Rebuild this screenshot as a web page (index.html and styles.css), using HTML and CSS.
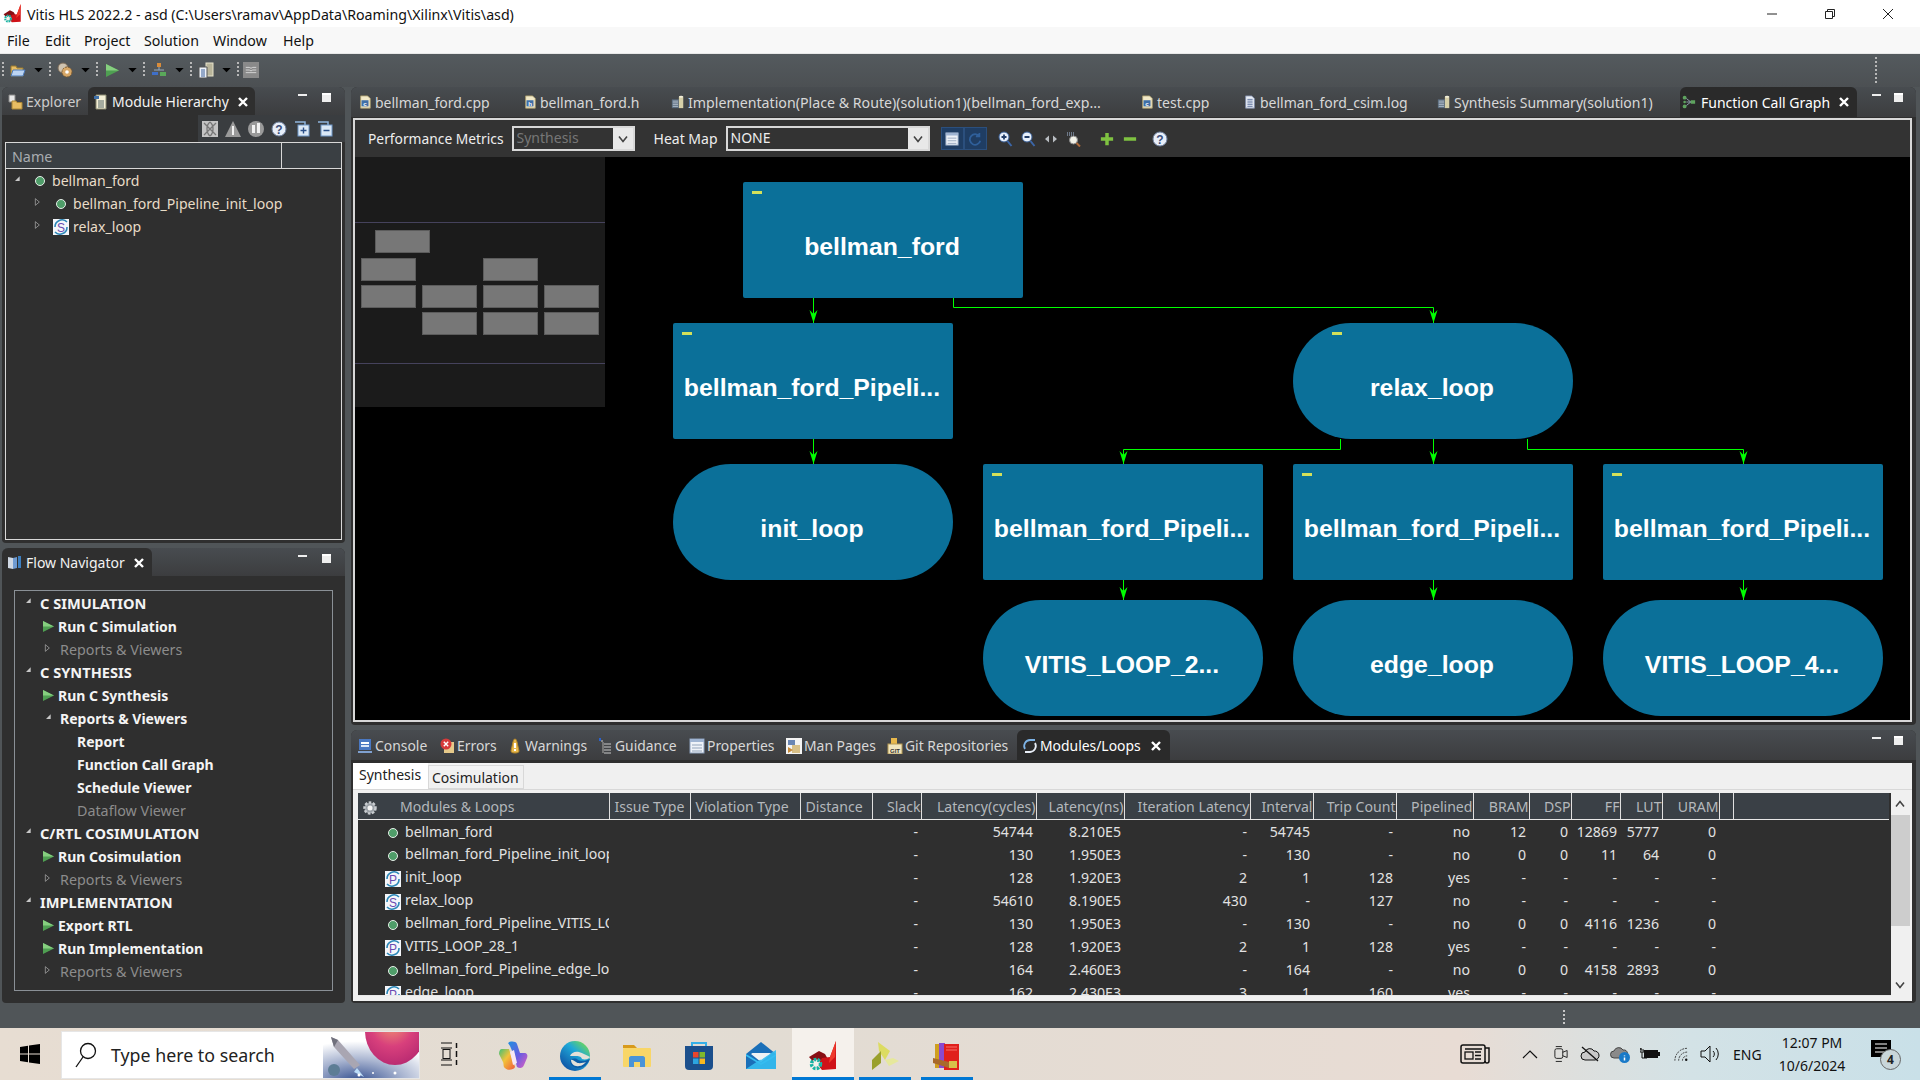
FILE: index.html
```html
<!DOCTYPE html>
<html lang="en">
<head>
<meta charset="utf-8">
<title>Vitis HLS 2022.2</title>
<link rel="stylesheet" href="styles.css">
</head>
<body>
<svg class="defs" aria-hidden="true">
  <symbol id="filebase" viewBox="0 0 16 16"><path d="M3 1h8l3 3v11H3z" fill="#f2e9c8" stroke="#a89a6a"/><rect x="4" y="6" width="8" height="7" fill="#3f6fa8"/></symbol>
  <symbol id="loopbase" viewBox="0 0 16 16"><rect width="16" height="16" fill="#f4f6fa"/><path d="M14 3A7 7 0 0 0 2 8" fill="none" stroke="#2d88b8" stroke-width="1.600"/><path d="M2 13A7 7 0 0 0 14 8" fill="none" stroke="#2d88b8" stroke-width="1.600"/></symbol>
  <symbol id="close" viewBox="0 0 10 10"><path d="M1 1l8 8M9 1L1 9" stroke="#fff" stroke-width="2.400"/></symbol>
  <symbol id="report" viewBox="0 0 16 16"><rect x="1" y="5" width="8" height="10" fill="#5b6d80"/><path d="M2 7h6M2 9h6M2 11h6M2 13h6" stroke="#b8c4d0"/><rect x="9" y="2" width="5" height="13" fill="#d6cfa8"/><ellipse cx="11.500" cy="2" rx="2.500" ry="1.200" fill="#f2eed8"/></symbol>
  <symbol id="doc" viewBox="0 0 16 16"><path d="M3 1h7l3 3v11H3z" fill="#e8edf6" stroke="#7f8ca8"/><path d="M5 5h6M5 7h6M5 9h6M5 11h6M5 13h6" stroke="#5a6f9a"/></symbol>
  <symbol id="graph" viewBox="0 0 16 16"><circle cx="3" cy="3" r="2.200" fill="#5ea35e"/><circle cx="3" cy="13" r="2.200" fill="#5ea35e"/><circle cx="3" cy="8" r="1.500" fill="#5ea35e"/><path d="M5 4l5 4-5 4M5 8h5" stroke="#9ab" fill="none"/><path d="M10 6h5v4h-5z" fill="#5ea35e"/></symbol>
  <symbol id="explorer" viewBox="0 0 16 16"><path d="M2 1h6v7H2z" fill="#e8e8e8" stroke="#888"/><path d="M5 7h4l1 1.500h5V15H5z" fill="#e7bd63" stroke="#a98636"/></symbol>
  <symbol id="hier" viewBox="0 0 16 16"><path d="M3 1h10v14H3z" fill="#f4efd6" stroke="#8a8a70"/><rect x="1" y="2" width="5" height="3" fill="#3f6fa8"/><path d="M5 7h6M5 9h6M5 11h6M5 13h6" stroke="#566"/></symbol>
  <symbol id="flowic" viewBox="0 0 16 16"><path d="M1 2l5 1v11l-5-1z" fill="#cfd8e3"/><path d="M6 3l4-1v11l-4 1z" fill="#6f9bd1"/><rect x="11" y="1" width="3" height="12" fill="#3d7fc0"/></symbol>
  <symbol id="dot" viewBox="0 0 16 16"><circle cx="8" cy="8" r="4.500" fill="#4f9d69" stroke="#e6eee8"/></symbol>
  <symbol id="play" viewBox="0 0 12 12"><path d="M0 0l12 6-12 6z" fill="#4f9f52"/><path d="M0 0l12 6H0z" fill="#86cf7f"/></symbol>
  <symbol id="open" viewBox="0 0 12 12"><path d="M2 1l6 5-6 5z" fill="#2f2f2f" stroke="#b8b8b8"/></symbol>
  <symbol id="closed" viewBox="0 0 12 12"><path d="M10 2v7H3z" fill="#c8c8c8"/></symbol>
  <symbol id="helpbase" viewBox="0 0 16 16"><circle cx="8" cy="8" r="7" fill="#e8eef8" stroke="#6d7f9c"/></symbol>
  <symbol id="down" viewBox="0 0 10 6"><path d="M0 0h10L5 5z" fill="#000"/></symbol>
  <symbol id="chev" viewBox="0 0 12 12"><path d="M2 3.500l4 5 4-5" fill="none" stroke="#444" stroke-width="1.600"/></symbol>
  <symbol id="zplus" viewBox="0 0 16 16"><circle cx="7" cy="6" r="5" fill="#e8f0fb" stroke="#395f97"/><path d="M4.500 6h5M7 3.500v5" stroke="#223c66" stroke-width="1.800"/><path d="M10.500 10l4 5" stroke="#3c66a8" stroke-width="2"/></symbol>
  <symbol id="zminus" viewBox="0 0 16 16"><circle cx="7" cy="6" r="5" fill="#e8f0fb" stroke="#395f97"/><path d="M4.500 6h5" stroke="#223c66" stroke-width="1.800"/><path d="M10.500 10l4 5" stroke="#3c66a8" stroke-width="2"/></symbol>
  <symbol id="fit" viewBox="0 0 16 16"><path d="M6 4.500l-4 3.500 4 3.500zM10 4.500l4 3.500-4 3.500z" fill="#b9bdc2"/></symbol>
  <symbol id="zsel" viewBox="0 0 16 16"><path d="M1 2h7M1 4h7" stroke="#a9c0e0" stroke-dasharray="1 1"/><circle cx="7.500" cy="9" r="4" fill="#f2f2e8" stroke="#888"/><path d="M10.500 12l3.500 3.500" stroke="#b06b3a" stroke-width="2"/></symbol>
  <symbol id="gplus" viewBox="0 0 16 16"><path d="M6 1h4v5h5v4h-5v5H6v-5H1V6h5z" fill="#7fc241"/></symbol>
  <symbol id="gminus" viewBox="0 0 16 16"><rect x="1" y="6" width="14" height="4" fill="#7fc241"/></symbol>
  <symbol id="console" viewBox="0 0 16 16"><rect x="2" y="1" width="12" height="11" fill="#4a78c2"/><rect x="4" y="4" width="8" height="2" fill="#fff"/><rect x="4" y="7" width="8" height="2" fill="#dbe6f8"/><path d="M1 14h14" stroke="#7fa0d0" stroke-width="2"/></symbol>
  <symbol id="errors" viewBox="0 0 16 16"><path d="M5 4h10v11H5z" fill="#e6c98a"/><circle cx="7" cy="6" r="5.500" fill="#d63a3a"/><path d="M4.800 3.800l4.400 4.400M9.200 3.800L4.800 8.200" stroke="#fff" stroke-width="1.400"/></symbol>
  <symbol id="warn" viewBox="0 0 16 16"><path d="M8 1c1 0 1.500 1 2 3l2 9c0 1-1 2-4 2s-4-1-4-2l2-9c.5-2 1-3 2-3z" fill="#e8b84c" stroke="#b5872a"/><rect x="7" y="5" width="2" height="5" fill="#fff"/><rect x="7" y="11" width="2" height="2" fill="#fff"/></symbol>
  <symbol id="guide" viewBox="0 0 16 16"><path d="M4 3h2M7 6h7M7 9h7M7 12h7M7 15h7" stroke="#c9c9c9"/><rect x="2" y="0" width="2" height="3" fill="#2a62d0"/><rect x="5" y="4" width="2" height="11" fill="#777"/></symbol>
  <symbol id="props" viewBox="0 0 16 16"><rect x="1" y="1" width="14" height="14" fill="#eef2f8" stroke="#8ca0bc"/><rect x="1" y="1" width="14" height="3" fill="#9fb4d2"/><path d="M3 7h10M3 10h10M3 13h10" stroke="#93a4ba"/></symbol>
  <symbol id="man" viewBox="0 0 16 16"><rect width="16" height="16" fill="#f4f4f4"/><rect x="2" y="2" width="7" height="5" fill="#6a86b4"/><path d="M6 7h8v8H6z" fill="#d8c088"/><path d="M2 9l5 3-5 3z" fill="#c68a3a"/></symbol>
  <symbol id="gitbase" viewBox="0 0 16 16"><path d="M4 0h6v6H4z" fill="#e8b84c"/><rect x="1" y="6" width="14" height="10" fill="#f1e6bf" stroke="#b59a54"/></symbol>
  <symbol id="mods" viewBox="0 0 16 16"><path d="M3 11A6 6 0 0 1 8 2h5" fill="none" stroke="#7db3e6" stroke-width="1.800"/><path d="M13 5A6 6 0 0 1 8 14H3" fill="none" stroke="#e8eef6" stroke-width="1.800"/></symbol>
  <symbol id="tbopen" viewBox="0 0 16 16"><path d="M1 4h5l1 2h6v8H1z" fill="#e7bd63" stroke="#9a7a30"/><path d="M3 8h12l-2 6H1z" fill="#bcd4f2" stroke="#4a78b8"/></symbol>
  <symbol id="tbgear" viewBox="0 0 16 16"><circle cx="6" cy="6" r="5" fill="#cfc3b0" stroke="#7a6a58"/><circle cx="10" cy="10" r="5" fill="#d8a868" stroke="#7a5a30" stroke-dasharray="2 1"/><circle cx="10" cy="10" r="1.800" fill="#fff"/></symbol>
  <symbol id="gearh" viewBox="0 0 16 16"><circle cx="8" cy="8" r="5.500" fill="#9aa0a6" stroke="#c8ccd0" stroke-width="2.500" stroke-dasharray="2.500 1.500"/><circle cx="8" cy="8" r="2.500" fill="#f4f4f4"/></symbol>
  <symbol id="tbhier" viewBox="0 0 16 16"><rect x="6" y="1" width="4" height="4" fill="#d98c3a"/><path d="M8 5v3M3 8h10" stroke="#9ab"/><rect x="1" y="10" width="6" height="3" fill="#3f6fc8"/><rect x="9" y="10" width="6" height="4" fill="#5aa85a"/></symbol>
  <symbol id="tbdoc" viewBox="0 0 16 16"><rect x="8" y="1" width="7" height="13" fill="#b8b49a" stroke="#e8e4cc"/><path d="M1 5h8v11H1z" fill="#eef2f8" stroke="#555"/><path d="M3 8h4M3 10h4M3 12h4M3 14h4" stroke="#3a5f98"/></symbol>
  <symbol id="tbwave" viewBox="0 0 16 16"><path d="M2 5h4l2 1 2-1h4M2 8h4l2 1 2-1h4M2 11h12" stroke="#ddd" fill="none"/></symbol>
  <symbol id="acx" viewBox="0 0 16 16"><rect width="16" height="16" fill="#c4c4c4"/><path d="M2 2l12 12M14 2L2 14M8 1c4 3 4 11 0 14M8 1C4 4 4 12 8 15" fill="none" stroke="#777" stroke-width="1.300"/></symbol>
  <symbol id="actri" viewBox="0 0 16 16"><path d="M8 0l8 16H0z" fill="#9a9a9a"/><path d="M7 5h2v9H7z" fill="#f2f2f2"/></symbol>
  <symbol id="acinfo" viewBox="0 0 16 16"><circle cx="8" cy="8" r="8" fill="#9a9a9a"/><path d="M4 4h3v8H4zM9 2h3v10H9z" fill="#f2f2f2"/></symbol>
  <symbol id="acplus" viewBox="0 0 16 16"><path d="M1 1h10v10" fill="none" stroke="#8fb4dc" stroke-width="1.500"/><rect x="4" y="4" width="11" height="11" fill="#dbe8f6" stroke="#6f98c8"/><path d="M6.500 9.500h6M9.500 6.500v6" stroke="#2a4f88" stroke-width="1.400"/></symbol>
  <symbol id="acminus" viewBox="0 0 16 16"><path d="M1 1h10v10" fill="none" stroke="#8fb4dc" stroke-width="1.500"/><rect x="4" y="4" width="11" height="11" fill="#dbe8f6" stroke="#6f98c8"/><path d="M6.500 9.500h6" stroke="#2a4f88" stroke-width="1.400"/></symbol>
  <symbol id="vitislogo" viewBox="0 0 30 30"><path d="M1 16L11 10l6 3 4 7-6 8-7-4z" fill="#870e13"/><path d="M14 17l8-1L28 0v28l-14 1-4-5z" fill="#cf1218"/><path d="M22 16L28 0l-1 16-6 6z" fill="#ee3a2c"/><circle cx="8" cy="23" r="4.500" fill="#f5f1ec" stroke="#17b3a3" stroke-width="3.500" stroke-dasharray="2.500 1.200"/></symbol>
</svg>

<div class="app">
  <header class="titlebar">
    <svg class="title-logo"><use href="#vitislogo"/></svg>
    <span class="title-text">Vitis HLS 2022.2 - asd (C:\Users\ramav\AppData\Roaming\Xilinx\Vitis\asd)</span>
    <div class="win-controls">
      <svg class="win-btn" viewBox="0 0 12 12"><path d="M1 6h10" stroke="#222"/></svg>
      <svg class="win-btn" viewBox="0 0 12 12"><path d="M1.500 3.500h7v7h-7zM3.500 3.500v-2h7v7h-2" fill="none" stroke="#222"/></svg>
      <svg class="win-btn" viewBox="0 0 12 12"><path d="M1 1l10 10M11 1L1 11" stroke="#222"/></svg>
    </div>
  </header>
  <nav class="menubar">
    <span class="m1">File</span><span class="m2">Edit</span><span class="m3">Project</span><span class="m4">Solution</span><span class="m5">Window</span><span class="m6">Help</span>
  </nav>
  <div class="toolbar">
    <i class="grip"></i><svg class="tb16"><use href="#tbopen"/></svg><svg class="tbdown"><use href="#down"/></svg>
    <i class="grip"></i><svg class="tb16"><use href="#tbgear"/></svg><svg class="tbdown"><use href="#down"/></svg>
    <i class="grip"></i><svg class="tb16 tbplay"><use href="#play"/></svg><svg class="tbdown"><use href="#down"/></svg>
    <i class="grip"></i><svg class="tb16"><use href="#tbhier"/></svg><svg class="tbdown"><use href="#down"/></svg>
    <i class="grip"></i><svg class="tb16"><use href="#tbdoc"/></svg><svg class="tbdown"><use href="#down"/></svg>
    <i class="grip"></i><span class="tbbtn"><svg class="ic14"><use href="#tbwave"/></svg></span>
    <i class="grip grip-right"></i>
  </div>

  <main class="workspace">
    <aside class="left-col">
      <section class="panel module-panel">
        <div class="tabstrip">
          <div class="ltab ltab-explorer"><svg class="ic16"><use href="#explorer"/></svg>Explorer</div>
          <div class="ltab ltab-module active"><svg class="ic16"><use href="#hier"/></svg>Module Hierarchy<svg class="close"><use href="#close"/></svg></div>
          <div class="viewctl"><i class="vmin"></i><i class="vmax"></i></div>
        </div>
        <div class="actions">
          <svg class="ic16"><use href="#acx"/></svg><svg class="ic16"><use href="#actri"/></svg><svg class="ic16"><use href="#acinfo"/></svg><svg class="ic16" viewBox="0 0 16 16"><use href="#helpbase"/><text x="8" y="12.500" class="ic-q">?</text></svg><svg class="ic16"><use href="#acplus"/></svg><svg class="ic16"><use href="#acminus"/></svg>
        </div>
        <div class="treebox">
          <div class="tree-head"><span class="th-name">Name</span><span class="th-rest"></span></div>
          <div class="tree-row lvl0"><svg class="arrow"><use href="#closed"/></svg><svg class="ic16"><use href="#dot"/></svg><span>bellman_ford</span></div>
          <div class="tree-row lvl1"><svg class="arrow"><use href="#open"/></svg><svg class="ic16"><use href="#dot"/></svg><span>bellman_ford_Pipeline_init_loop</span></div>
          <div class="tree-row lvl1"><svg class="arrow"><use href="#open"/></svg><svg class="ic16" viewBox="0 0 16 16"><use href="#loopbase"/><text x="8" y="12.500" class="ic-l">S</text></svg><span>relax_loop</span></div>
        </div>
      </section>

      <section class="panel flow-panel">
        <div class="tabstrip">
          <div class="ltab ltab-flow active"><svg class="ic16"><use href="#flowic"/></svg>Flow Navigator<svg class="close"><use href="#close"/></svg></div>
          <div class="viewctl"><i class="vmin"></i><i class="vmax"></i></div>
        </div>
        <div class="flowbox">
          <div class="fr sec"><svg class="arrow"><use href="#closed"/></svg>C SIMULATION</div>
          <div class="fr run"><svg class="playic"><use href="#play"/></svg>Run C Simulation</div>
          <div class="fr rep off"><svg class="arrow"><use href="#open"/></svg>Reports &amp; Viewers</div>
          <div class="fr sec"><svg class="arrow"><use href="#closed"/></svg>C SYNTHESIS</div>
          <div class="fr run"><svg class="playic"><use href="#play"/></svg>Run C Synthesis</div>
          <div class="fr rep"><svg class="arrow"><use href="#closed"/></svg>Reports &amp; Viewers</div>
          <div class="fr leaf">Report</div>
          <div class="fr leaf">Function Call Graph</div>
          <div class="fr leaf">Schedule Viewer</div>
          <div class="fr leaf off">Dataflow Viewer</div>
          <div class="fr sec"><svg class="arrow"><use href="#closed"/></svg>C/RTL COSIMULATION</div>
          <div class="fr run"><svg class="playic"><use href="#play"/></svg>Run Cosimulation</div>
          <div class="fr rep off"><svg class="arrow"><use href="#open"/></svg>Reports &amp; Viewers</div>
          <div class="fr sec"><svg class="arrow"><use href="#closed"/></svg>IMPLEMENTATION</div>
          <div class="fr run"><svg class="playic"><use href="#play"/></svg>Export RTL</div>
          <div class="fr run"><svg class="playic"><use href="#play"/></svg>Run Implementation</div>
          <div class="fr rep off"><svg class="arrow"><use href="#open"/></svg>Reports &amp; Viewers</div>
        </div>
      </section>
    </aside>

    <div class="right-col">
      <section class="panel graph-panel">
        <div class="tabstrip editor-tabs">
          <div class="etab"><svg class="ic14" viewBox="0 0 16 16"><use href="#filebase"/><text x="8" y="12" class="ic-f">c</text></svg><span>bellman_ford.cpp</span></div>
          <div class="etab"><svg class="ic14" viewBox="0 0 16 16"><use href="#filebase"/><text x="8" y="12" class="ic-f">h</text></svg><span>bellman_ford.h</span></div>
          <div class="etab"><svg class="ic14"><use href="#report"/></svg><span>Implementation(Place &amp; Route)(solution1)(bellman_ford_exp...</span></div>
          <div class="etab"><svg class="ic14" viewBox="0 0 16 16"><use href="#filebase"/><text x="8" y="12" class="ic-f">c</text></svg><span>test.cpp</span></div>
          <div class="etab"><svg class="ic14"><use href="#doc"/></svg><span>bellman_ford_csim.log</span></div>
          <div class="etab"><svg class="ic14"><use href="#report"/></svg><span>Synthesis Summary(solution1)</span></div>
          <div class="etab active"><svg class="ic14"><use href="#graph"/></svg><span>Function Call Graph</span><svg class="close"><use href="#close"/></svg></div>
          <div class="viewctl"><i class="vmin"></i><i class="vmax"></i></div>
        </div>
        <div class="graph-body">
          <div class="graph-tools">
            <span class="lbl lbl-perf">Performance Metrics</span>
            <div class="combo combo-perf"><span class="combo-val">Synthesis</span><span class="combo-btn"><svg class="ic12"><use href="#chev"/></svg></span></div>
            <span class="lbl lbl-heat">Heat Map</span>
            <div class="combo combo-heat"><span class="combo-val">NONE</span><span class="combo-btn"><svg class="ic12"><use href="#chev"/></svg></span></div>
            <span class="toggle"><svg class="ic14"><use href="#props"/></svg></span><span class="toggle toggle-off"><svg class="ic14" viewBox="0 0 16 16"><path d="M13 5A6 6 0 1 0 14 10M13 1v4H9" fill="none" stroke="#2f5f9a" stroke-width="2"/></svg></span>
            <svg class="ic16 gt-z1"><use href="#zplus"/></svg>
            <svg class="ic16 gt"><use href="#zminus"/></svg>
            <svg class="ic16 gt"><use href="#fit"/></svg>
            <svg class="ic16 gt"><use href="#zsel"/></svg>
            <svg class="ic14 gt-plus"><use href="#gplus"/></svg>
            <svg class="ic14 gt-minus"><use href="#gminus"/></svg>
            <svg class="ic16 gt-help" viewBox="0 0 16 16"><use href="#helpbase"/><text x="8" y="12.500" class="ic-q">?</text></svg>
          </div>
          <div class="canvas">
            <svg class="edges" viewBox="0 0 1555 565">
              <g fill="none" stroke="#00ff00">
                <path d="M458.500 141v25M598.500 141v9.500h480V166M458.500 282v25M985.500 282v10.500h-217V307M1078.500 282v25M1172.500 282v10.500h216V307M768.500 423v21M1078.500 423v21M1388.500 423v21"/>
              </g>
              <g fill="#00ff00">
                <path d="M458.500 166l-4-13 4 4 4-4zM1078.500 166l-4-13 4 4 4-4zM458.500 307l-4-13 4 4 4-4zM768.500 307l-4-13 4 4 4-4zM1078.500 307l-4-13 4 4 4-4zM1388.500 307l-4-13 4 4 4-4zM768.500 443l-4-13 4 4 4-4zM1078.500 443l-4-13 4 4 4-4zM1388.500 443l-4-13 4 4 4-4z"/>
              </g>
            </svg>
            <div class="node n-top"><i class="fold"></i>bellman_ford</div>
            <div class="node n-pipe"><i class="fold"></i>bellman_ford_Pipeli...</div>
            <div class="node round n-relax"><i class="fold"></i>relax_loop</div>
            <div class="node round n-init">init_loop</div>
            <div class="node n-b1"><i class="fold"></i>bellman_ford_Pipeli...</div>
            <div class="node n-b2"><i class="fold"></i>bellman_ford_Pipeli...</div>
            <div class="node n-b3"><i class="fold"></i>bellman_ford_Pipeli...</div>
            <div class="node round n-l1">VITIS_LOOP_2...</div>
            <div class="node round n-l2">edge_loop</div>
            <div class="node round n-l3">VITIS_LOOP_4...</div>
            <div class="mini">
              <i class="mini-line ml1"></i><i class="mini-line ml2"></i>
              <i class="mb mb1"></i><i class="mb mb2"></i><i class="mb mb3"></i><i class="mb mb4"></i><i class="mb mb5"></i><i class="mb mb6"></i><i class="mb mb7"></i><i class="mb mb8"></i><i class="mb mb9"></i><i class="mb mb10"></i>
            </div>
          </div>
        </div>
      </section>

      <section class="panel results-panel">
        <div class="tabstrip bottom-tabs">
          <div class="btab"><svg class="ic16"><use href="#console"/></svg><span>Console</span></div>
          <div class="btab"><svg class="ic16"><use href="#errors"/></svg><span>Errors</span></div>
          <div class="btab"><svg class="ic16"><use href="#warn"/></svg><span>Warnings</span></div>
          <div class="btab"><svg class="ic16"><use href="#guide"/></svg><span>Guidance</span></div>
          <div class="btab"><svg class="ic16"><use href="#props"/></svg><span>Properties</span></div>
          <div class="btab"><svg class="ic16"><use href="#man"/></svg><span>Man Pages</span></div>
          <div class="btab"><svg class="ic16" viewBox="0 0 16 16"><use href="#gitbase"/><text x="8" y="14.500" class="ic-g">GIT</text></svg><span>Git Repositories</span></div>
          <div class="btab active"><svg class="ic16"><use href="#mods"/></svg><span>Modules/Loops</span><svg class="close"><use href="#close"/></svg></div>
          <div class="viewctl"><i class="vmin"></i><i class="vmax"></i></div>
        </div>
        <div class="results-body">
          <div class="subtabs"><span class="sub sub-on">Synthesis</span><span class="sub">Cosimulation</span></div>
          <div class="gridwrap">
            <div class="gridclip">
              <table class="grid">
                <colgroup><col><col><col><col><col><col><col><col><col><col><col><col><col><col><col><col><col><col></colgroup>
                <thead><tr>
                  <th class="name-h"><svg class="ic16 gear-h"><use href="#gearh"/></svg>Modules &amp; Loops</th><th class="l">Issue Type</th><th class="l">Violation Type</th><th class="l">Distance</th><th>Slack</th><th>Latency(cycles)</th><th>Latency(ns)</th><th>Iteration Latency</th><th>Interval</th><th>Trip Count</th><th>Pipelined</th><th>BRAM</th><th>DSP</th><th>FF</th><th>LUT</th><th>URAM</th><th></th><th class="last"></th>
                </tr></thead>
                <tbody>
                  <tr><td class="nm"><svg class="ic16"><use href="#dot"/></svg><span>bellman_ford</span></td><td></td><td></td><td></td><td>-</td><td>54744</td><td>8.210E5</td><td>-</td><td>54745</td><td>-</td><td>no</td><td>12</td><td>0</td><td>12869</td><td>5777</td><td>0</td><td></td><td></td></tr>
                  <tr><td class="nm"><svg class="ic16"><use href="#dot"/></svg><span>bellman_ford_Pipeline_init_loop</span></td><td></td><td></td><td></td><td>-</td><td>130</td><td>1.950E3</td><td>-</td><td>130</td><td>-</td><td>no</td><td>0</td><td>0</td><td>11</td><td>64</td><td>0</td><td></td><td></td></tr>
                  <tr><td class="nm"><svg class="ic16" viewBox="0 0 16 16"><use href="#loopbase"/><text x="8" y="12.500" class="ic-l">P</text></svg><span>init_loop</span></td><td></td><td></td><td></td><td>-</td><td>128</td><td>1.920E3</td><td>2</td><td>1</td><td>128</td><td>yes</td><td>-</td><td>-</td><td>-</td><td>-</td><td>-</td><td></td><td></td></tr>
                  <tr><td class="nm"><svg class="ic16" viewBox="0 0 16 16"><use href="#loopbase"/><text x="8" y="12.500" class="ic-l">S</text></svg><span>relax_loop</span></td><td></td><td></td><td></td><td>-</td><td>54610</td><td>8.190E5</td><td>430</td><td>-</td><td>127</td><td>no</td><td>-</td><td>-</td><td>-</td><td>-</td><td>-</td><td></td><td></td></tr>
                  <tr><td class="nm"><svg class="ic16"><use href="#dot"/></svg><span>bellman_ford_Pipeline_VITIS_LOOP_28_1</span></td><td></td><td></td><td></td><td>-</td><td>130</td><td>1.950E3</td><td>-</td><td>130</td><td>-</td><td>no</td><td>0</td><td>0</td><td>4116</td><td>1236</td><td>0</td><td></td><td></td></tr>
                  <tr><td class="nm"><svg class="ic16" viewBox="0 0 16 16"><use href="#loopbase"/><text x="8" y="12.500" class="ic-l">P</text></svg><span>VITIS_LOOP_28_1</span></td><td></td><td></td><td></td><td>-</td><td>128</td><td>1.920E3</td><td>2</td><td>1</td><td>128</td><td>yes</td><td>-</td><td>-</td><td>-</td><td>-</td><td>-</td><td></td><td></td></tr>
                  <tr><td class="nm"><svg class="ic16"><use href="#dot"/></svg><span>bellman_ford_Pipeline_edge_loop</span></td><td></td><td></td><td></td><td>-</td><td>164</td><td>2.460E3</td><td>-</td><td>164</td><td>-</td><td>no</td><td>0</td><td>0</td><td>4158</td><td>2893</td><td>0</td><td></td><td></td></tr>
                  <tr><td class="nm"><svg class="ic16" viewBox="0 0 16 16"><use href="#loopbase"/><text x="8" y="12.500" class="ic-l">P</text></svg><span>edge_loop</span></td><td></td><td></td><td></td><td>-</td><td>162</td><td>2.430E3</td><td>3</td><td>1</td><td>160</td><td>yes</td><td>-</td><td>-</td><td>-</td><td>-</td><td>-</td><td></td><td></td></tr>
                </tbody>
              </table>
            </div>
            <div class="scrollbar"><svg class="ic12 sb-up"><use href="#chev"/></svg><i class="thumb"></i><svg class="ic12 sb-down"><use href="#chev"/></svg></div>
          </div>
        </div>
      </section>
    </div>
  </main>

  <div class="statusbar"><i class="status-grip"></i></div>

  <footer class="taskbar">
    <svg class="win-logo" viewBox="0 0 20 20"><path d="M0 3l8-1.200V9.500H0zM9 1.600L20 0v9.500H9zM0 10.500h8v7.700L0 17zM9 10.500h11V20L9 18.400z" fill="#000"/></svg>
    <div class="search">
      <svg class="search-ic" viewBox="0 0 22 26"><circle cx="13" cy="9" r="7.500" fill="none" stroke="#111" stroke-width="1.300"/><path d="M8 15L1 25" stroke="#111" stroke-width="1.300"/></svg>
      <span class="search-text">Type here to search</span>
      <svg class="search-art" viewBox="0 0 96 46">
        <defs>
          <radialGradient id="artbg" cx=".35" cy="1.100" r=".9"><stop offset="0" stop-color="#2e4a8c"/><stop offset=".55" stop-color="#a8b4d0"/><stop offset="1" stop-color="#fff"/></radialGradient>
          <radialGradient id="sphere" cx=".45" cy=".35" r=".75"><stop offset="0" stop-color="#f4a070"/><stop offset=".5" stop-color="#d8407c"/><stop offset="1" stop-color="#b0246e"/></radialGradient>
        </defs>
        <rect width="96" height="46" fill="url(#artbg)"/>
        <ellipse cx="72" cy="-1" rx="30" ry="34" fill="url(#sphere)"/>
        <path d="M8 5l7 3 22 25-6 4L11 15z" fill="#a9a6b2"/>
        <path d="M8 5l7 3-4 7z" fill="#70707c"/>
        <path d="M34 36l7 9-10-5z" fill="#bcdcf8"/>
        <circle cx="11" cy="38" r="6" fill="#5d7d95"/>
        <circle cx="36" cy="43" r="1.500" fill="#fff"/><circle cx="72" cy="41" r="1.500" fill="#fff"/><circle cx="50" cy="41" r="1" fill="#fff"/>
      </svg>
    </div>
    <svg class="taskview" viewBox="0 0 20 24"><path d="M1 1h11M1 6h11M1 18h11M1 23h11" stroke="#111" stroke-width="1.200"/><rect x="3" y="7.500" width="7" height="9" fill="none" stroke="#111"/><path d="M16.500 1v5M16.500 9v6M16.500 18v5" stroke="#111" stroke-width="1.500"/></svg>
    <div class="apps">
      <span class="app-slot"><svg class="app-ic" viewBox="0 0 30 30">
        <defs><linearGradient id="cop1" x1="0" y1="0" x2="1" y2="1"><stop offset="0" stop-color="#1f8fe0"/><stop offset=".55" stop-color="#6c5ce0"/><stop offset="1" stop-color="#e060c0"/></linearGradient><linearGradient id="cop2" x1="0" y1="0" x2="1" y2="1"><stop offset="0" stop-color="#3fbf7a"/><stop offset=".45" stop-color="#f2c23a"/><stop offset="1" stop-color="#ef5a3a"/></linearGradient></defs>
        <path d="M10 2c2-2 8-2 9 1l3 9h4c3 0 4 2 3 5l-3 7c-1 3-4 4-7 2l-4-14-3-7z" fill="url(#cop1)"/><path d="M4 8h7l6 18c-1 3-8 4-10 1-2-1-1-4-2-6L1 13c0-3 1-5 3-5z" fill="url(#cop2)"/><path d="M12 11l4-2 3 13-4 2z" fill="#f8e8f4"/></svg></span>
      <span class="app-slot slot-edge"><svg class="app-ic" viewBox="0 0 30 30">
        <defs><linearGradient id="edge" x1=".9" y1=".1" x2=".2" y2=".9"><stop offset="0" stop-color="#70d858"/><stop offset=".4" stop-color="#1fa8d8"/><stop offset="1" stop-color="#0f58a8"/></linearGradient></defs>
        <circle cx="15" cy="15" r="15" fill="url(#edge)"/><path d="M10 15c1-3 5-5 9-4 4 1 7 3 11 5-1 2-5 3-8 2-1-3-4-3-6-3z" fill="#e4e0d8"/><path d="M30 18c-3 1-7 3-12 1-2-2-6-2-8 1 0 4 4 7 8 7 6 0 10-4 12-9z" fill="#0d5ea8"/><path d="M11 19c0 4 4 7 8 6 3 0 5-2 7-4-3 1-8 2-10 0-2-1-4-3-5-2z" fill="#e4e0d8"/></svg></span>
      <span class="app-slot"><svg class="app-ic" viewBox="0 0 30 30"><path d="M1 4h11l3 3H1z" fill="#d89a1c"/><rect x="1" y="7" width="28" height="19" rx="1" fill="#f8d668"/><path d="M7 26V17c0-1 1-2 2-2h12c1 0 2 1 2 2v9h-5v-5h-6v5z" fill="#4a94d8"/></svg></span>
      <span class="app-slot"><svg class="app-ic" viewBox="0 0 30 30"><path d="M8 6V2h14v4" fill="none" stroke="#35b0e8" stroke-width="2"/><path d="M1 5h28v20a4 4 0 0 1-4 4H5a4 4 0 0 1-4-4z" fill="#1b4f8c"/><rect x="9" y="11" width="5.500" height="5.500" fill="#e8452c"/><rect x="15.500" y="11" width="5.500" height="5.500" fill="#7fba2c"/><rect x="9" y="17.500" width="5.500" height="5.500" fill="#2ca5e0"/><rect x="15.500" y="17.500" width="5.500" height="5.500" fill="#f8b820"/></svg></span>
      <span class="app-slot"><svg class="app-ic" viewBox="0 0 30 30"><path d="M15 1l15 12v15H0V13z" fill="#1a6fb8"/><path d="M5 13h20l-10 8z" fill="#f0f4f6"/><path d="M15 18L30 9v19H0z" fill="#35bdf0" opacity=".9"/><path d="M0 13l15 9 15-9v2L15 24 0 15z" fill="#35bdf0"/><path d="M5 12h20L15 19z" fill="#eef2f4"/></svg></span>
      <span class="app-slot slot-vitis"><svg class="app-ic"><use href="#vitislogo"/></svg></span>
      <span class="app-slot slot-viv"><svg class="app-ic" viewBox="0 0 30 30"><path d="M8 1l12 9-5 9-6-9z" fill="#dcdc62"/><path d="M15 19l8-2 6 3-10 5z" fill="#e6e89c"/><path d="M2 19l9-9v12L2 29z" fill="#9aa02c"/></svg></span>
      <span class="app-slot slot-book"><svg class="app-ic" viewBox="0 0 30 30"><rect x="3" y="3" width="5" height="24" fill="#d0a020"/><rect x="7" y="2" width="6" height="25" fill="#8a4ad0"/><rect x="12" y="3" width="15" height="26" fill="#e0201c"/><path d="M14 6h11M14 9h11" stroke="#f87068"/><path d="M1 17l16 4v6L1 22z" fill="#a86a2c"/><rect x="17" y="20" width="8" height="7" fill="#d8c04a"/></svg></span>
    </div>
    <div class="tray">
      <svg class="news" viewBox="0 0 30 20"><rect x="1" y="1" width="24" height="18" rx="2" fill="none" stroke="#111" stroke-width="1.500"/><path d="M25 4h4v13a2 2 0 0 1-4 0" fill="none" stroke="#111" stroke-width="1.500"/><rect x="5" y="8" width="8" height="7" fill="none" stroke="#111" stroke-width="1.300"/><path d="M5 5h17M15 8h6M15 11.500h6M15 15h6" stroke="#111" stroke-width="1.300"/></svg>
      <svg class="tr t-chev" viewBox="0 0 16 10"><path d="M1 9l7-7 7 7" fill="none" stroke="#111" stroke-width="1.200"/></svg>
      <svg class="tr t-meet" viewBox="0 0 16 20"><rect x="1" y="4" width="9" height="11" rx="2" fill="none" stroke="#111"/><path d="M10 8l5-2v8l-5-2" fill="none" stroke="#111"/><path d="M2 1.500h7M2 18.500h7" stroke="#111"/></svg>
      <svg class="tr t-cloud" viewBox="0 0 20 18"><path d="M5 15a4 4 0 0 1 0-8 5 5 0 0 1 9-1 4.500 4.500 0 0 1 1 9z" fill="#c9c9c9" stroke="#111"/><path d="M2 2l16 14" stroke="#111" stroke-width="1.300"/></svg>
      <svg class="tr t-cloudi" viewBox="0 0 20 18"><path d="M4 13a3.500 3.500 0 0 1 0-7 5 5 0 0 1 9-1 4 4 0 0 1 1 8z" fill="#8a8a8a" stroke="#444"/><circle cx="14.500" cy="12.500" r="5.500" fill="#1a7ac8"/><path d="M14.500 10.500v.8M14.500 12.500v3" stroke="#fff" stroke-width="1.500"/></svg>
      <svg class="tr t-batt" viewBox="0 0 20 12"><rect x="4" y="2" width="14" height="8" fill="#111"/><rect x="18" y="4" width="2" height="4" fill="#111"/><path d="M1 0v2h3v2H0V2zM2 4v6h5" fill="none" stroke="#111"/></svg>
      <svg class="tr t-wifi" viewBox="0 0 18 16"><path d="M2 15A13 13 0 0 1 15 2M6 15a9 9 0 0 1 9-9M10 15a5 5 0 0 1 5-5" fill="none" stroke="#333" stroke-dasharray="2 1"/><circle cx="14" cy="14" r="1.300" fill="#111"/></svg>
      <svg class="tr t-vol" viewBox="0 0 20 18"><path d="M1 6h4l5-5v16l-5-5H1z" fill="none" stroke="#111"/><path d="M13 6a4 4 0 0 1 0 6M16 3a9 9 0 0 1 0 12" fill="none" stroke="#111"/></svg>
      <span class="eng">ENG</span>
      <div class="clock"><span>12:07 PM</span><span>10/6/2024</span></div>
      <div class="action"><svg class="action-ic" viewBox="0 0 20 18"><path d="M0 0h20v17H0z" fill="#000"/><path d="M4 4h12M4 8h12M4 12h12" stroke="#fff"/></svg><span class="badge">4</span></div>
    </div>
  </footer>
</div>
</body>
</html>
```

FILE: styles.css
```css
* { box-sizing: border-box; }
html, body { margin: 0; padding: 0; height: 100%; overflow: hidden; }
body { font-family: "Noto Sans", "Open Sans", sans-serif; font-size: 14.1px; color: #ddd; background: #505558; }
.defs { position: absolute; width: 0; height: 0; }
.app { display: flex; flex-direction: column; width: 1920px; height: 1080px; }
i { display: block; font-style: normal; }
svg text { font-family: "Liberation Sans", sans-serif; text-anchor: middle; }
.ic-q { font-size: 12px; font-weight: 700; fill: #3a4d78; }
.ic-l { font-size: 12px; fill: #6a4bb0; }
.ic-f { font-size: 7px; font-weight: 700; fill: #fff; }
.ic-g { font-size: 6px; font-weight: 700; fill: #333; }

/* title + menu */
.titlebar { height: 27px; background: #fff; display: flex; align-items: center; color: #111; flex: none; }
.title-logo { width: 19px; height: 19px; margin-left: 3px; flex: none; }
.title-text { margin-left: 5px; font-size: 14.2px; white-space: nowrap; padding-top: 1px; }
.win-controls { margin-left: auto; display: flex; padding-right: 26px; }
.win-btn { width: 12px; height: 12px; margin-left: 46px; }
.menubar { height: 26px; background: #f8f8f8; display: flex; align-items: center; color: #111; font-size: 14.2px; flex: none; padding-left: 7px; padding-top: 1px; }
.m1 { width: 38px; } .m2 { width: 39px; } .m3 { width: 60px; } .m4 { width: 69px; } .m5 { width: 70px; }

/* toolbar */
.toolbar { height: 34px; background: linear-gradient(#e8e8e8 0 1px, #545a5e 1px, #4c5053); flex: none; display: flex; align-items: center; padding-left: 2px; }
.grip { width: 2px; height: 16px; background: repeating-linear-gradient(#b8b8b8 0 2px, transparent 2px 4px); }
.tb16 { width: 16px; height: 16px; margin: 0 8px 0 6px; flex: none; }
.tbplay { width: 13px; height: 13px; margin: 0 9px 0 8px; }
.tbdown { width: 9px; height: 5px; margin-right: 6px; flex: none; }
.tbbtn { width: 16px; height: 16px; background: #8a8a8a; margin-left: 4px; display: flex; align-items: center; justify-content: center; }
.grip-right { margin-left: auto; margin-right: 43px; height: 26px; }
.ic12 { width: 12px; height: 12px; flex: none; }
.ic14 { width: 14px; height: 14px; flex: none; }
.ic16 { width: 16px; height: 16px; flex: none; }

/* workspace */
.workspace { height: 916px; display: flex; flex: none; padding-left: 2px; gap: 6px; }
.left-col { width: 343px; display: flex; flex-direction: column; gap: 5px; flex: none; }
.right-col { width: 1565px; display: flex; flex-direction: column; gap: 5px; flex: none; }
.panel { background: #2f2f2f; border-radius: 6px 6px 4px 4px; display: flex; flex-direction: column; overflow: hidden; }
.module-panel { height: 456px; }
.flow-panel { height: 455px; }
.graph-panel { height: 638px; }
.results-panel { height: 273px; }
.statusbar { height: 25px; flex: none; position: relative; background: #505558; }
.status-grip { position: absolute; left: 1563px; top: 7px; width: 2px; height: 16px; background: repeating-linear-gradient(#c8c8c8 0 2px, transparent 2px 4px); }

.tabstrip { height: 28px; background: linear-gradient(#484c50, #3c3d3f); display: flex; align-items: stretch; flex: none; white-space: nowrap; }
.close { width: 10px; height: 10px; flex: none; }
.viewctl { margin-left: auto; display: flex; gap: 15px; padding: 6px 14px 0 0; align-items: flex-start; }
.editor-tabs .viewctl, .bottom-tabs .viewctl { gap: 13px; padding-right: 13px; }
.vmin { width: 9px; height: 2px; margin-top: 1px; background: #eee; }
.vmax { width: 9px; height: 9px; background: #eee; border-top: 2px solid #fff; }

.ltab { display: flex; align-items: center; gap: 3px; color: #ccc; font-size: 14px; padding-top: 1px; }
.ltab.active { background: #2f2f2f; color: #f2f2f2; border-radius: 6px 6px 0 0; }
.ltab-explorer { width: 86px; padding-left: 5px; }
.ltab-module { width: 167px; padding-left: 5px; }
.ltab-module .close, .ltab-flow .close { margin-left: 6px; }
.ltab-flow { width: 150px; padding-left: 5px; }

.actions { height: 27px; display: flex; justify-content: flex-end; align-items: center; gap: 7px; padding-right: 12px; flex: none; background: linear-gradient(90deg, #2f2f2f 196px, #3a3d40 196px); }
.treebox { margin: 0 3px 3px; border: 1px solid #d8d8d8; flex: 1; }
.tree-head { height: 26px; background: #3a3f43; border-bottom: 1px solid #d8d8d8; display: flex; align-items: center; color: #a8acb0; font-size: 14.3px; }
.th-name { width: 276px; height: 100%; border-right: 1px solid #d8d8d8; padding: 1px 0 0 6px; display: flex; align-items: center; }
.tree-row { height: 23px; display: flex; align-items: center; white-space: nowrap; color: #e8dcc8; }
.lvl0 { padding-left: 7px; }
.lvl1 { padding-left: 28px; }
.arrow { width: 8px; height: 8px; margin-right: 11px; margin-top: -4px; flex: none; }
.tree-row span { margin-left: 4px; }

.flowbox { margin: 14px 12px 12px 12px; border: 1px solid #8a9096; flex: 1; padding-top: 1px; font-weight: 700; color: #f4f4f4; font-size: 14px; }
.fr { height: 23px; display: flex; align-items: center; white-space: nowrap; }
.fr.off { font-weight: 400; color: #8c8c8c; font-size: 14.3px; }
.sec { padding: 0 0 1px 9px; font-size: 14.6px; }
.sec .arrow { margin-right: 8px; }
.run { padding-left: 28px; }
.playic { width: 11px; height: 11px; margin-right: 4px; flex: none; }
.rep { padding-left: 29px; }
.rep .arrow { margin-right: 8px; }
.leaf { padding-left: 62px; }

/* editor tabs */
.editor-tabs { height: 30px; padding-left: 7px; font-size: 14px; color: #d8d8d8; }
.etab { display: flex; align-items: center; gap: 3px; overflow: hidden; }
.etab.active { background: #2a2a2a; color: #fff; border-radius: 6px 6px 0 0; padding-left: 2px; gap: 5px; }
.etab .close { margin-left: 4px; }
.etab:nth-child(1) { width: 165px; }
.etab:nth-child(2) { width: 147px; }
.etab:nth-child(3) { width: 470px; font-size: 14.2px; padding-left: 1px; }
.etab:nth-child(4) { width: 103px; }
.etab:nth-child(5) { width: 193px; }
.etab:nth-child(6) { width: 244px; padding-left: 1px; }
.etab:nth-child(7) { width: 177px; }
.graph-body { flex: 1; background: #000; border: 2px solid #d8d8d8; margin: 1px 4px 3px 2px; display: flex; flex-direction: column; min-height: 0; }
.graph-tools { height: 37px; background: #333; display: flex; align-items: center; flex: none; font-size: 14px; color: #eee; white-space: nowrap; }
.lbl-perf { margin-left: 13px; font-size: 13.8px; }
.lbl-heat { margin-left: 19px; }
.combo { height: 25px; border: 2px solid #d8d8d8; display: flex; align-items: stretch; background: #333; margin-left: 8px; font-size: 14px; }
.combo-perf { width: 123px; color: #777; }
.combo-heat { width: 204px; color: #eee; }
.combo-val { flex: 1; padding-left: 3px; line-height: 20px; }
.combo-btn { width: 20px; background: #e8e8e8; display: flex; align-items: center; justify-content: center; }
.toggle { width: 23px; height: 23px; background: #1f3d63; display: flex; align-items: center; justify-content: center; border: 1px solid #2b4f7d; }
.combo-heat + .toggle { margin-left: 11px; }
.gt-z1 { margin-left: 10px; }
.gt { margin-left: 7px; }
.gt-plus { margin-left: 18px; }
.gt-minus { margin-left: 9px; }
.gt-help { margin-left: 15px; }

.canvas { flex: 1; position: relative; overflow: hidden; background: #000; }
.edges { position: absolute; left: 0; top: 0; width: 1555px; height: 565px; }
.node { position: absolute; width: 280px; height: 116px; background: #0b7099; color: #fff; font: 700 24.8px "Liberation Sans", sans-serif; display: flex; align-items: center; justify-content: center; border-radius: 2px; white-space: nowrap; padding: 13px 2px 0 0; }
.node.round { border-radius: 58px; }
.fold { position: absolute; left: 9px; top: 9px; width: 10px; height: 3px; background: #d4e05a; }
.round .fold { left: 39px; }
.n-top { left: 388px; top: 25px; }
.n-pipe { left: 318px; top: 166px; }
.n-relax { left: 938px; top: 166px; }
.n-init { left: 318px; top: 307px; }
.n-b1 { left: 628px; top: 307px; }
.n-b2 { left: 938px; top: 307px; }
.n-b3 { left: 1248px; top: 307px; }
.n-l1 { left: 628px; top: 443px; }
.n-l2 { left: 938px; top: 443px; }
.n-l3 { left: 1248px; top: 443px; }
.mini { position: absolute; left: 0; top: 0; width: 250px; height: 250px; background: #1b1b1b; }
.mini-line { position: absolute; left: 0; width: 250px; height: 1px; background: #45425c; }
.ml1 { top: 65px; }
.ml2 { top: 206px; }
.mb { position: absolute; width: 55px; height: 23px; background: #777; border: 1px solid #5c5c5c; }
.mb1 { left: 20px; top: 73px; }
.mb2 { left: 6px; top: 101px; }
.mb3 { left: 128px; top: 101px; }
.mb4 { left: 6px; top: 128px; }
.mb5 { left: 67px; top: 128px; }
.mb6 { left: 128px; top: 128px; }
.mb7 { left: 189px; top: 128px; }
.mb8 { left: 67px; top: 155px; }
.mb9 { left: 128px; top: 155px; }
.mb10 { left: 189px; top: 155px; }

/* bottom tabs */
.bottom-tabs { height: 30px; padding-left: 6px; font-size: 13.9px; color: #d8d8d8; }
.btab { display: flex; align-items: center; gap: 2px; padding-top: 1px; }
.btab.active { background: #2a2a2a; color: #fff; border-radius: 6px 6px 0 0; padding-left: 5px; }
.btab .close { margin-left: 8px; }
.btab:nth-child(1) { width: 82px; }
.btab:nth-child(2) { width: 68px; }
.btab:nth-child(3) { width: 90px; }
.btab:nth-child(4) { width: 92px; }
.btab:nth-child(5) { width: 97px; }
.btab:nth-child(6) { width: 101px; }
.btab:nth-child(7) { width: 130px; }
.btab:nth-child(8) { width: 153px; }
.results-body { flex: 1; background: #f0f0f0; margin: 3px 4px 2px 2px; display: flex; flex-direction: column; min-height: 0; color: #222; }
.subtabs { height: 27px; display: flex; border-bottom: 1px solid #d8d8d8; flex: none; }
.sub { width: 96px; margin-top: 2px; background: #f0f0f0; border: 1px solid #d8d8d8; padding-left: 3px; font-size: 14px; line-height: 23px; }
.sub-on { width: 75px; margin-top: 0; background: #fff; padding-left: 6px; border: 0; }
.gridwrap { margin: 3px 2px 0 5px; flex: 1; display: flex; min-height: 0; border-bottom: 5px solid #f0f0f0; }
.gridclip { flex: 1; overflow: hidden; background: #2f2f2f; border-bottom: 1px solid #e8e8e8; }
.grid { table-layout: fixed; width: 1531px; border-collapse: collapse; color: #e2e2e2; font-size: 14.1px; }
.grid col:nth-child(1) { width: 251px; }
.grid col:nth-child(2) { width: 81px; }
.grid col:nth-child(3) { width: 110px; }
.grid col:nth-child(4) { width: 72px; }
.grid col:nth-child(5) { width: 49px; }
.grid col:nth-child(6) { width: 115px; }
.grid col:nth-child(7) { width: 88px; }
.grid col:nth-child(8) { width: 126px; }
.grid col:nth-child(9) { width: 63px; }
.grid col:nth-child(10) { width: 83px; }
.grid col:nth-child(11) { width: 77px; }
.grid col:nth-child(12) { width: 56px; }
.grid col:nth-child(13) { width: 42px; }
.grid col:nth-child(14) { width: 49px; }
.grid col:nth-child(15) { width: 42px; }
.grid col:nth-child(16) { width: 57px; }
.grid col:nth-child(17) { width: 14px; }
.grid th { height: 26px; background: #3a4046; color: #b4b8bc; font-weight: 400; text-align: right; padding: 1px 0 0; border-right: 1px solid #e0e0e0; border-bottom: 1px solid #e8e8e8; overflow: hidden; white-space: nowrap; }
.grid th.l { text-align: left; padding-left: 5px; }
.grid th.last { border-right: 0; }
.grid th.name-h { text-align: left; padding-left: 0; }
.gear-h { vertical-align: middle; margin: 0 22px 0 4px; }
.grid td { height: 23px; padding: 1px 3px 0 0; text-align: right; overflow: hidden; white-space: nowrap; }
.grid td.nm { text-align: left; padding: 1px 0 0; }
.nm svg { vertical-align: middle; margin-left: 27px; margin-right: 4px; }
.scrollbar { width: 19px; background: #f0f0f0; position: relative; flex: none; }
.thumb { position: absolute; left: 0; top: 22px; width: 19px; height: 111px; background: #cdcdcd; }
.sb-up { position: absolute; left: 3px; top: 5px; transform: rotate(180deg); }
.sb-down { position: absolute; left: 3px; top: 186px; }

/* taskbar */
.taskbar { height: 52px; flex: none; display: flex; align-items: center; position: relative; background: linear-gradient(90deg, #e7ddd2, #e2dcd3 40%, #e8dcd4 76%, #d3e2e6 88%, #c9e0e8); color: #111; }
.win-logo { width: 20px; height: 20px; margin-left: 20px; flex: none; }
.search { margin-left: 21px; width: 359px; height: 48px; background: #fff; display: flex; align-items: center; flex: none; margin-top: 2px; border: 1px solid #e6e6e6; }
.search-ic { width: 22px; height: 26px; margin-left: 13px; flex: none; }
.search-text { margin-left: 14px; font-size: 17.8px; color: #222; white-space: nowrap; }
.search-art { width: 96px; height: 46px; margin-left: auto; flex: none; }
.taskview { width: 20px; height: 24px; margin-left: 20px; flex: none; }
.apps { display: flex; margin-left: 22px; height: 52px; align-items: center; flex: none; }
.app-slot { width: 62px; height: 52px; display: flex; align-items: center; justify-content: center; flex: none; position: relative; padding-top: 3px; }
.app-ic { width: 30px; height: 30px; }
.slot-edge::after, .slot-vitis::after, .slot-viv::after, .slot-book::after { content: ""; position: absolute; bottom: 0; height: 3px; left: 5px; right: 5px; background: #0078d4; }
.slot-vitis { background: #f5f1ec; }
.slot-vitis::after { left: 0; right: 0; }
.tray { margin-left: auto; display: flex; align-items: center; height: 52px; padding-right: 15px; flex: none; }
.news { width: 30px; height: 20px; }
.tr { height: 18px; margin-left: 13px; }
.t-chev { width: 16px; height: 10px; margin-left: 32px; }
.t-meet { width: 14px; height: 20px; margin-left: 16px; }
.t-cloud { width: 20px; margin-left: 12px; }
.t-cloudi { width: 20px; margin-left: 10px; }
.t-batt { width: 20px; height: 12px; margin-left: 10px; }
.t-wifi { width: 17px; height: 16px; margin-left: 13px; }
.t-vol { width: 20px; margin-left: 10px; }
.eng { margin-left: 13px; font-size: 14px; width: 29px; }
.clock { width: 70px; margin-left: 15px; display: flex; flex-direction: column; align-items: center; font-size: 14px; line-height: 23px; white-space: nowrap; }
.action { width: 36px; height: 40px; margin-left: 22px; position: relative; flex: none; }
.action-ic { position: absolute; left: 2px; top: 6px; width: 20px; height: 18px; }
.badge { position: absolute; left: 11px; top: 15px; width: 21px; height: 21px; border-radius: 50%; background: #c9d6da; border: 1px solid #666; font-size: 12px; font-weight: 700; text-align: center; line-height: 19px; color: #222; }
```
